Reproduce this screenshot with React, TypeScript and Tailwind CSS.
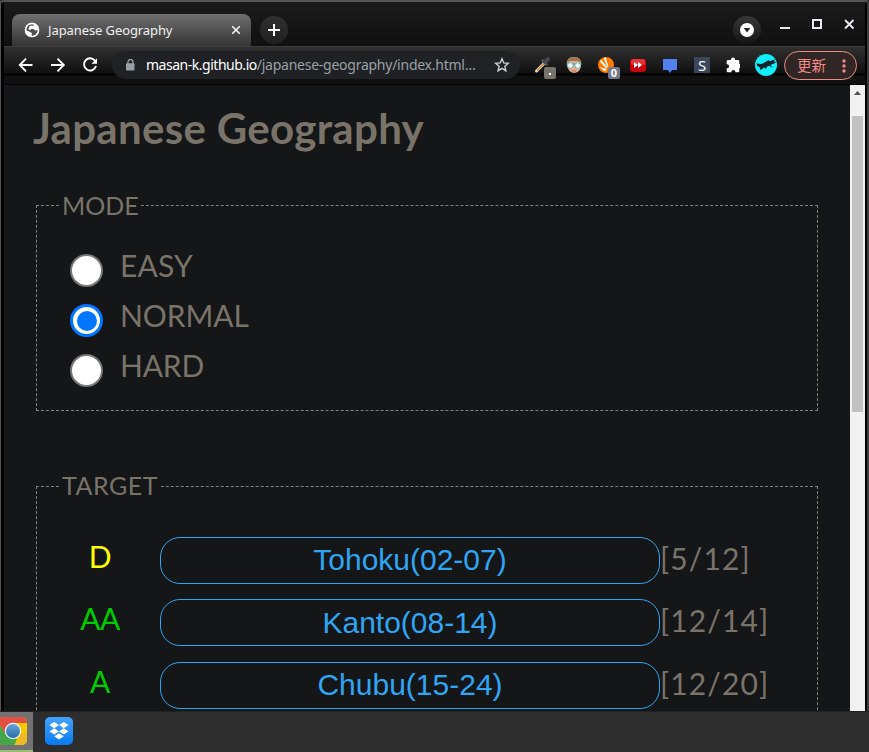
import type { ReactNode } from "react";

const modes = [
  { label: "EASY", checked: false, spacing: "tracking-[0.2px]" },
  { label: "NORMAL", checked: true, spacing: "tracking-[-0.1px]" },
  { label: "HARD", checked: false, spacing: "tracking-[-0.2px]" },
];

const targets = [
  { rank: "D", color: "text-[#ffff00]", name: "Tohoku(02-07)", score: "[5/12]", gap: "mb-[15px]", lift: "pb-[3px]" },
  { rank: "AA", color: "text-[#00cc00]", name: "Kanto(08-14)", score: "[12/14]", gap: "mb-4", lift: "pb-[1px]" },
  { rank: "A", color: "text-[#00cc00]", name: "Chubu(15-24)", score: "[12/20]", gap: "mb-4", lift: "pb-[3px]" },
];

function Slot({ className, children }: { className: string; children: ReactNode }) {
  return <div className={`flex shrink-0 items-center justify-center ${className}`}>{children}</div>;
}

function TitleBar() {
  return (
    <div className="flex h-[44px] items-start bg-gradient-to-b from-[#1b1b1b] to-[#101010] pl-[8px]">
      <div className="mt-[12px] flex h-[32px] w-[239px] items-center rounded-t-[8px] bg-gradient-to-b from-[#707070] to-[#353535] pl-[12px]">
        <svg width="16" height="16" viewBox="0 0 16 16" className="shrink-0">
          <circle cx="8" cy="8" r="7.2" fill="#fff" />
          <path d="M7.2 2.2 10 2.5 8.7 4.2 7 5.2v1.6l2.7.1 1.4 1.7 2.4-.5.3 1.7-2 2.7-2.8 1.4-1.5-.5.5-2-1.7-1.5-3.9-1.3.2-2.6 1.8-2.7Z" fill="#505050" />
          <path d="M5.6 4 8 3.4 9.6 5 7.6 6 6.5 8 4.4 7.6Z" fill="#fff" />
          <circle cx="8" cy="8" r="6.6" fill="none" stroke="#fff" strokeWidth="1.4" />
        </svg>
        <span className="ml-[8px] w-[180px] whitespace-nowrap text-[13px] leading-[18px] tracking-[-0.1px] text-[#f0f0f0]">Japanese Geography</span>
        <svg width="10" height="10" viewBox="0 0 10 10" className="ml-[3px]" stroke="#f5f5f5" strokeWidth="1.6"><path d="m1.2 1.2 7.6 7.6M8.8 1.2 1.2 8.8" /></svg>
      </div>
      <Slot className="ml-[9px] mt-[14px] size-[28px] rounded-full bg-gradient-to-b from-[#303030] to-[#202020]">
        <svg width="12" height="12" viewBox="0 0 12 12" stroke="#fff" strokeWidth="2"><path d="M6 0v12M0 6h12" /></svg>
      </Slot>
      <div className="grow" />
      <Slot className="mr-[19px] mt-[14px] size-[28px] rounded-full bg-gradient-to-b from-[#383838] to-[#151515]">
        <svg width="14" height="14" viewBox="0 0 14 14"><circle cx="7" cy="7" r="7" fill="#fff" /><path d="M3.7 5h6.6L7 9.5Z" fill="#242424" /></svg>
      </Slot>
      <svg width="76" height="14" viewBox="0 0 76 14" className="mr-[9px] mt-[15px]" fill="none" stroke="#e8e8ef">
        <path d="M0 11h10" strokeWidth="2" />
        <rect x="33" y="3" width="8" height="8" strokeWidth="2" />
        <path d="m65 3 8.5 8.5m0-8.5L65 11.5" strokeWidth="1.9" />
      </svg>
    </div>
  );
}

function Toolbar() {
  return (
    <div className="flex h-[39px] items-start border-t border-[#3e3e3e] border-b border-b-black bg-[linear-gradient(#303030_0,#101010_26px,#000_27px,#000_28px,#111_29px,#111_37px)] pl-[14px] pt-[4px]">
      <svg width="80" height="28" viewBox="0 0 80 28" fill="none" stroke="#fff" strokeWidth="1.9">
        <path d="M14.5 14H2M8 7.7 1.8 14 8 20.3M33 14h12.7M39.5 7.7 45.8 14l-6.3 6.3" />
        <path d="M77.2 10A6.1 6.1 0 1 0 78 15" />
        <path d="M79 7.2v5.5h-5.5Z" fill="#fff" stroke="none" />
      </svg>
      <div className="ml-[14px] flex h-[28px] w-[408px] items-center rounded-full bg-[#202124] pl-[14px]">
        <svg width="9" height="12" viewBox="0 0 9 12"><path d="M2 5V3a2.5 2.5 0 0 1 5 0v2" fill="none" stroke="#9aa0a6" strokeWidth="1.3" /><rect y="4.2" width="8.5" height="7.3" rx="1" fill="#9aa0a6" /></svg>
        <span className="ml-[11px] w-[348px] whitespace-nowrap text-[14px] leading-[20px] tracking-[-0.25px] text-[#9aa0a6]"><span className="tracking-[-0.48px] text-white">masan-k.github.io</span>/japanese-geography/index.html…</span>
        <svg width="16" height="16" viewBox="0 0 16 16" className="shrink-0"><path d="m8 1.8 1.75 4.1 4.5.4-3.4 3 1 4.4L8 11.4l-3.9 2.3 1-4.4-3.4-3 4.5-.4Z" fill="none" stroke="#d0d2d5" strokeWidth="1.4" /></svg>
      </div>
      <svg width="206" height="28" viewBox="534 51 206 28" className="ml-[14px] mr-[15px] shrink-0">
        <path d="m536.5 71 8-8" stroke="#eee0c8" strokeWidth="3" strokeLinecap="round" /><path d="m537 70.5 7-7" stroke="#bf8231" strokeWidth="1.3" />
        <path d="m542.5 60.5 4 4" stroke="#55585d" strokeWidth="2.5" strokeLinecap="round" /><path d="m545.5 61.5 2.5-2.5" stroke="#45484d" strokeWidth="4" strokeLinecap="round" />
        <rect x="544" y="67" width="12" height="12" rx="2" fill="#77736a" /><rect x="549" y="73" width="2" height="2" fill="#fff" />
        <path d="M567 65q-1-8 7-8t7 8q0 7-7 8-6-1-7-8" fill="#e4a98f" /><path d="M567 63q0-6 7-6t7 6l-3-2h-8Z" fill="#9a7951" />
        <path d="M566.5 64h15" stroke="#5f9ba0" strokeWidth="1.5" />
        <g fill="#e8fffc" stroke="#79b8bc" strokeWidth="1"><circle cx="570.3" cy="65.5" r="2.8" /><circle cx="577.7" cy="65.5" r="2.8" /></g><path d="M572 71h4" stroke="#b9735c" />
        <circle cx="606" cy="65" r="8" fill="#ff7a00" />
        <path d="m599.5 67 7 2-1.5 2.5Zm.3-5.5 1.5-1.7 6 7.7-1 1Zm4-3.5 2-.7 2.4 9-1 .7Z" fill="#fff" />
        <rect x="608" y="67" width="12" height="12" rx="2" fill="#73788a" />
        <text x="614" y="77" textAnchor="middle" fill="#fff" className="font-['Noto_Sans'] text-[11px] font-bold">0</text>
        <rect x="630" y="59" width="16" height="13" rx="3" fill="#c7020d" /><rect x="631" y="59" width="14" height="6" rx="2" fill="#e83137" /><path d="m634 62 4 3-4 3Zm4 0 4 3-4 3Z" fill="#fff" />
        <path d="M663 59h14v11h-5l-2 3-2-3h-5Z" fill="#5280ec" />
        <rect x="694" y="57" width="16" height="16" fill="#3c4659" />
        <text x="702" y="70.5" textAnchor="middle" fill="#fff" className="font-['Noto_Sans'] text-[15px]">S</text>
        <path d="M728 60h3v-.5a2 2 0 0 1 4 0v.5h3a1.3 1.3 0 0 1 1.3 1.3V64h.2a2 2 0 0 1 0 4h-.2v3a1.3 1.3 0 0 1-1.3 1.3h-2.6V72a2 2 0 0 0-4 0v.3H728a1.3 1.3 0 0 1-1.3-1.3v-2.7h.4a2 2 0 0 0 0-4h-.4v-3A1.3 1.3 0 0 1 728 60Z" fill="#fff" />
      </svg>
      <svg width="22" height="22" viewBox="0 0 22 22" className="mr-[7px] mt-[3px] shrink-0"><circle cx="11" cy="11" r="11" fill="#11efff" /><path d="m1.5 9.5 5 .4 4-2 3-2 1.2 1.4 5.3-2-1 2.2 2.4.4-2.8 1.8-3 1 2.2 3.4-3.3-2.3-2 .4-1.6 2.6-1.9-1.2-3.4 2.6-1.2-3.3-2.2-.8Z" fill="#10252c" /></svg>
      <div className="flex h-[29px] w-[73px] shrink-0 items-center rounded-full border border-[#f28b82] bg-[#302626] pl-[12px] font-['Noto_Sans_CJK_JP',sans-serif] text-[14.5px] leading-[20px] text-[#f28b82]">
        <span className="mt-[-2px] w-[29px] whitespace-nowrap">更新</span>
        <svg width="4" height="14" viewBox="0 0 4 14" fill="#f28b82" className="ml-[16px]"><circle cx="2" cy="2" r="1.7" /><circle cx="2" cy="7" r="1.7" /><circle cx="2" cy="12" r="1.7" /></svg>
      </div>
    </div>
  );
}

function Radio({ checked }: { checked: boolean }) {
  return (
    <span className={`flex size-[33px] shrink-0 items-center justify-center rounded-full bg-white ${checked ? "border-[3px] border-[#0075ff]" : "border-[2.5px] border-[#767676]"}`}>
      {checked && <span className="size-[20px] rounded-full bg-[#0075ff]" />}
    </span>
  );
}

function Page() {
  return (
    <main className="h-[626px] w-[846px] overflow-hidden bg-[#141618] pl-[32px] font-['Lato',sans-serif] text-[#79736a]">
      <h1 className="ml-[-3px] mt-[13px] h-[60px] whitespace-nowrap text-[42px] font-bold leading-[60px] tracking-[0.3px]">Japanese Geography</h1>
      <fieldset className="mt-[32px] h-[221px] w-[782px] border border-dashed border-[#858078] pl-[33px]">
        <legend className="ml-[-10px] h-[30px] w-[81px] whitespace-nowrap pl-[2px] text-[25px] leading-[30px]">MODE</legend>
        <div className="mt-[25px] flex flex-col">
          {modes.map((m) => (
            <label key={m.label} className="flex h-[50px] items-start pt-[9px]">
              <Radio checked={m.checked} />
              <span className={`ml-[17px] mt-[-6px] whitespace-nowrap text-[30px] leading-[34px] ${m.spacing}`}>{m.label}</span>
            </label>
          ))}
        </div>
      </fieldset>
      <fieldset className="mt-[60px] h-[400px] w-[782px] border border-dashed border-[#858078] pl-[23px]">
        <legend className="h-[30px] w-[101px] whitespace-nowrap pl-[2px] text-[25px] leading-[28px] tracking-[0.5px]">TARGET</legend>
        <div className="mt-[36px]">
          {targets.map((t) => (
            <div key={t.name} className={`flex h-[47px] items-center ${t.gap}`}>
              <span className={`mr-[20px] mt-[-10px] w-[80px] text-center text-[30px] leading-[40px] tracking-[-0.5px] ${t.color}`}>{t.rank}</span>
              <button className={`h-[47px] w-[500px] rounded-[20px] border border-[#30a5f3] text-center font-['Liberation_Sans',Arial,sans-serif] text-[30px] leading-[43px] text-[#30a5f3] ${t.lift}`}>{t.name}</button>
              <span className="mt-[-5px] whitespace-nowrap text-[30px] leading-[40px] tracking-[1.1px]">{t.score}</span>
            </div>
          ))}
        </div>
      </fieldset>
    </main>
  );
}

export default function App() {
  return (
    <div className="flex h-[752px] w-[869px] flex-col overflow-hidden bg-[#2d2d2d] font-['Noto_Sans',sans-serif]">
      <div className="h-[711px] rounded-t-[4px] border-l border-r-2 border-t-2 border-l-[#555] border-r-[#3d3d3d] border-t-[#555] bg-black pl-[3px] pr-[2px]">
        <TitleBar />
        <Toolbar />
        <div className="flex h-[626px]">
          <Page />
          <div className="flex w-[15px] flex-col items-center bg-[#f1f1f1]">
            <svg width="15" height="31" viewBox="0 0 15 31"><path d="m4 10 3.5-4L11 10Z" fill="#505050" /></svg>
            <div className="h-[296px] w-[11px] bg-[#c1c1c1]" />
          </div>
        </div>
      </div>
      <footer className="flex h-[41px] items-start border-t border-[#222] bg-[#2d2d2d]">
        <div className="h-[40px] w-[33px] overflow-hidden border-b-2 border-[#9abb76] bg-[#727272] pt-[5px]">
          <svg width="28" height="28" viewBox="0 0 28 28">
            <defs><clipPath id="chromeTile"><rect x="-2" width="29" height="28" rx="5" /></clipPath><linearGradient id="hub" x2="0" y2="1"><stop stopColor="#66a5d9" /><stop offset="1" stopColor="#286da9" /></linearGradient></defs>
            <g clipPath="url(#chromeTile)"><path d="M0 0h28v28H0Z" fill="#f5c800" /><path d="M-2-1h30v7H13L5 17-2 5Z" fill="#e34f43" /><path d="M-2 5 6 18l11 4-3 7H-2Z" fill="#43a64b" /><path d="m21 17-6 12h13V17Z" fill="#eeba25" /></g>
            <circle cx="13" cy="14" r="8.2" fill="#eef3f8" /><circle cx="13" cy="14" r="7" fill="url(#hub)" />
          </svg>
        </div>
        <svg width="28" height="28" viewBox="0 0 28 28" className="ml-[12px] mt-[5px]">
          <defs><linearGradient id="boxTile" x2="0" y2="1"><stop stopColor="#45a3ff" /><stop offset="1" stopColor="#087af1" /></linearGradient></defs>
          <rect width="28" height="28" rx="5" fill="url(#boxTile)" />
          <path d="m9.2 5 4.8 3-4.8 3.2L4.4 8Zm9.6 0 4.8 3-4.8 3.2L14 8ZM9.2 11.2l4.8 3.2-4.8 3.2-4.8-3.2Zm9.6 0 4.8 3.2-4.8 3.2-4.8-3.2ZM14 16.2l4.8 3.1-4.8 3.2-4.8-3.2Z" fill="#fff" />
          <path d="m9 18.6 5-3.4 5 3.4" fill="none" stroke="#258fff" />
        </svg>
      </footer>
    </div>
  );
}
